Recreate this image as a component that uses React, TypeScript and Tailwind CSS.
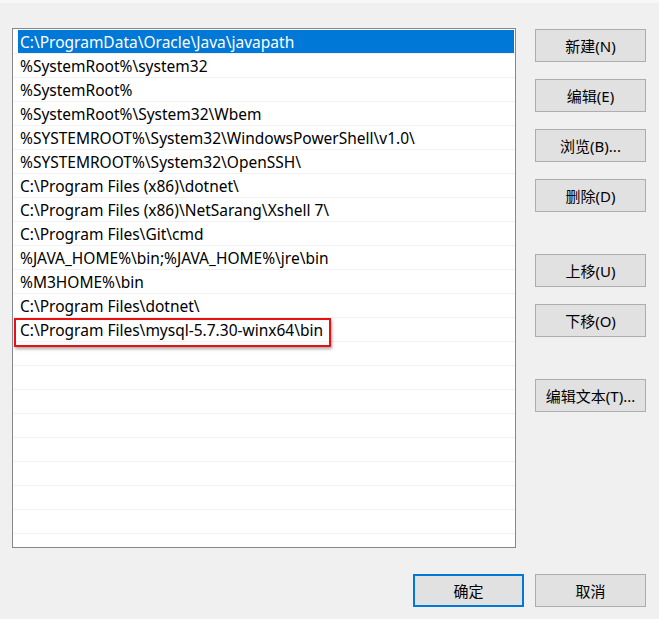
import React from "react";

const paths = [
  "C:\\ProgramData\\Oracle\\Java\\javapath",
  "%SystemRoot%\\system32",
  "%SystemRoot%",
  "%SystemRoot%\\System32\\Wbem",
  "%SYSTEMROOT%\\System32\\WindowsPowerShell\\v1.0\\",
  "%SYSTEMROOT%\\System32\\OpenSSH\\",
  "C:\\Program Files (x86)\\dotnet\\",
  "C:\\Program Files (x86)\\NetSarang\\Xshell 7\\",
  "C:\\Program Files\\Git\\cmd",
  "%JAVA_HOME%\\bin;%JAVA_HOME%\\jre\\bin",
  "%M3HOME%\\bin",
  "C:\\Program Files\\dotnet\\",
  "C:\\Program Files\\mysql-5.7.30-winx64\\bin",
];

const EMPTY_ROWS = 10;

interface ButtonProps {
  label: string;
  primary?: boolean;
  className?: string;
}

function WinButton({ label, primary, className = "" }: ButtonProps) {
  return (
    <button
      className={
        "flex h-[33px] w-[111px] items-center justify-center bg-[#e1e1e1] pt-[1px] text-[15px] text-black " +
        (primary ? "border-2 border-[#0078d7] " : "border border-[#adadad] ") +
        className
      }
    >
      {label}
    </button>
  );
}

export default function App() {
  return (
    <div
      className="flex h-[619px] w-[659px] flex-col overflow-hidden bg-[#f0f0f0]"
      style={{ fontFamily: '"Noto Sans", "Noto Sans CJK SC", sans-serif' }}
    >
      <div className="h-[3px] bg-[#f7f7f7]" />
      <div className="flex pt-[25px]">
        {/* Path list */}
        <div className="relative ml-[12px] h-[520px] w-[504px] overflow-hidden border border-[#828790] bg-white pl-[1px] pt-[1px]">
          {paths.map((p, i) => (
            <div key={p} className="h-[24px] border-b border-[#f0f0f0] pl-[4px] pr-[1px]">
              <div
                className={
                  "flex h-[23px] items-center pl-[2px] pt-[2px] text-[15.5px] leading-none " +
                  (i === 0 ? "bg-[#0078d7] text-white" : "text-black")
                }
              >
                {p}
              </div>
            </div>
          ))}
          {Array.from({ length: EMPTY_ROWS }).map((_, i) => (
            <div key={i} className="h-[24px] border-b border-[#f0f0f0]" />
          ))}
          {/* red annotation box */}
          <div className="absolute left-[1px] top-[289px] h-[29px] w-[317px] border-2 border-[#e81010] shadow-[1px_2px_3px_rgba(0,0,0,0.35)]" />
        </div>

        {/* Action buttons */}
        <div className="ml-[19px] mt-[1px] flex flex-col">
          <WinButton label="新建(N)" />
          <WinButton label="编辑(E)" className="mt-[17px]" />
          <WinButton label="浏览(B)..." className="mt-[17px]" />
          <WinButton label="删除(D)" className="mt-[17px]" />
          <WinButton label="上移(U)" className="mt-[42px]" />
          <WinButton label="下移(O)" className="mt-[17px]" />
          <WinButton label="编辑文本(T)..." className="mt-[42px]" />
        </div>
      </div>

      <div className="mr-[13px] mt-[26px] flex justify-end gap-[11px]">
        <WinButton label="确定" primary />
        <WinButton label="取消" />
      </div>
    </div>
  );
}
